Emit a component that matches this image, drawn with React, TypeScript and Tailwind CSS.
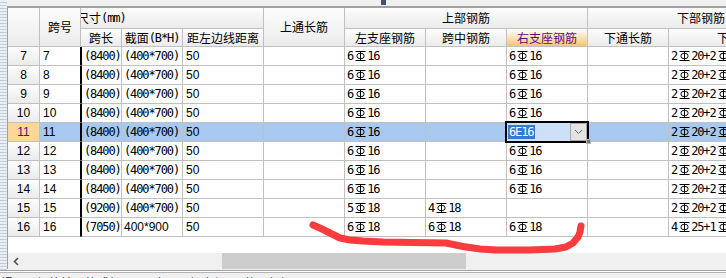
import React from "react";

const cols =
  "grid grid-cols-[32px_41px_41px_61px_81px_81px_81px_81px_81px_81px_81px] w-max";
const cjk = "font-['Noto_Sans_CJK_SC',sans-serif] text-[12px] leading-none";
const mono = "font-['DejaVu_Sans_Mono',monospace] text-[12px] tracking-[-1.1px] leading-none";
const sans = "font-['Liberation_Sans',sans-serif] text-[12px] leading-none";
const line = "border-r border-b border-[#c0c0c0]";
const head = "bg-linear-to-b from-[#fdfdfd] to-[#ebebeb]";

// HRB400 rebar mark
const Sym = () => (
  <svg width="12" height="12" viewBox="0 0 12 12" className="shrink-0 ml-[2px]" fill="none" stroke="#000" strokeWidth="1">
    <path d="M0.5 1.5h10M0.5 10.5h10M5.5 1.5v9" />
    <rect x="2" y="3.5" width="7" height="5" rx="2.2" />
  </svg>
);

const Rebar = ({ v }: { v: string }) => {
  if (!v) return null;
  const parts = v.split("E");
  return (
    <span className={`flex items-center ${mono}`}>
      {parts.map((p, i) => (
        <React.Fragment key={i}>
          {i > 0 && <Sym />}
          {p}
        </React.Fragment>
      ))}
    </span>
  );
};

type Row = {
  no: number;
  len: string;
  sec: string;
  left: string;
  mid: string;
  right: string;
  last: string;
};

const rows: Row[] = [
  ...[7, 8, 9, 10, 11, 12, 13, 14].map((no) => ({
    no,
    len: "(8400)",
    sec: "(400*700)",
    left: "6E16",
    mid: "",
    right: "6E16",
    last: "2E20+2E",
  })),
  { no: 15, len: "(9200)", sec: "(400*700)", left: "5E18", mid: "4E18", right: "", last: "2E20+2E" },
  { no: 16, len: "(7050)", sec: "400*900", left: "6E18", mid: "6E18", right: "6E18", last: "4E25+1E" },
];

const HeadCell = ({ className = "", children }: { className?: string; children?: React.ReactNode }) => (
  <div className={`${line} ${head} flex items-center justify-center overflow-hidden whitespace-nowrap ${cjk} ${className}`}>
    {children}
  </div>
);

const EditCell = () => (
  <div className={`${line} relative`}>
    <div className="absolute -left-[2px] -top-[2px] w-[84px] h-[22px] border-2 border-black bg-[#cde0f7] z-10 flex items-center">
      <span className={`ml-[1px] h-[14px] px-[1px] flex items-center bg-[#3478d8] text-white ${mono}`}>6E16</span>
      <div className="ml-auto w-[17px] h-[18px] bg-[#e3e3e3] border border-[#a9a9a9] flex items-center justify-center">
        <svg width="9" height="6" viewBox="0 0 9 6" fill="none" stroke="#6a6a6a" strokeWidth="1">
          <path d="M1 1l3.5 3.5L8 1" />
        </svg>
      </div>
    </div>
    <div className="absolute left-[79px] top-[16px] w-[5px] h-[5px] bg-[#7a7a7a] border border-[#b0b0b0] z-20" />
  </div>
);

export default function App() {
  return (
    <div className="w-[726px] h-[278px] overflow-hidden relative bg-[#f0f0f0] flex flex-col">
      <div className="flex h-[270px] shrink-0">
        <div className="w-[7px] shrink-0 bg-[repeating-linear-gradient(0deg,#c3cddb_0px,#c3cddb_1px,#eaeff6_1px,#eaeff6_3px)]" />
        <div className="flex-1 flex flex-col min-w-0">
          <div className="h-[6px] flex shrink-0">
            <div className="ml-[374px] w-[5px] h-[5px] bg-[#44536a]" />
          </div>
          <div className="h-[2px] bg-[#a0a0a0] shrink-0" />
          <div className="h-[261px] border-l border-[#a0a0a0] bg-white flex flex-col overflow-hidden">
            {/* header */}
            <div className={`${cols} grid-rows-[21px_18px]`}>
              <HeadCell className="row-span-2" />
              <HeadCell className="row-span-2">跨号</HeadCell>
              <HeadCell className="col-span-3 !justify-start">
                <span className="-ml-[4px] flex items-center">
                  尺寸<span className={mono}>(mm)</span>
                </span>
              </HeadCell>
              <HeadCell className="row-span-2">上通长筋</HeadCell>
              <HeadCell className="col-span-3">上部钢筋</HeadCell>
              <HeadCell className="col-span-2 !justify-start pl-[89px]">下部钢筋</HeadCell>
              <HeadCell>跨长</HeadCell>
              <HeadCell>
                截面<span className={mono}>(B*H)</span>
              </HeadCell>
              <HeadCell>距左边线距离</HeadCell>
              <HeadCell>左支座钢筋</HeadCell>
              <HeadCell>跨中钢筋</HeadCell>
              <HeadCell className="from-[#fdebc1] to-[#f5c66f] text-[#5c0d7c]">右支座钢筋</HeadCell>
              <HeadCell>下通长筋</HeadCell>
              <HeadCell className="!justify-start pl-[48px]">下部钢筋</HeadCell>
            </div>
            {/* data rows */}
            {rows.map((r) => {
              const sel = r.no === 11;
              return (
                <div key={r.no} className={`${cols} h-[19px] shrink-0 ${sel ? "bg-[#a7c8ef]" : "bg-white"}`}>
                  <div
                    className={`${line} flex items-center justify-center ${sans} ${
                      sel ? "bg-[#fdd797] text-[#5a0a78]" : head
                    }`}
                  >
                    {r.no}
                  </div>
                  <div className={`border-b border-[#c0c0c0] border-r border-r-black flex items-center px-[3px] ${sans}`}>
                    {r.no}
                  </div>
                  <div className={`${line} border-l border-l-black flex items-center px-[2px] overflow-hidden whitespace-nowrap ${mono}`}>
                    {r.len}
                  </div>
                  <div
                    className={`${line} flex items-center px-[2px] overflow-hidden whitespace-nowrap ${
                      r.sec.startsWith("(") ? mono : sans
                    }`}
                  >
                    {r.sec}
                  </div>
                  <div className={`${line} flex items-center px-[3px] ${sans}`}>50</div>
                  <div className={line} />
                  <div className={`${line} flex items-center px-[2px]`}>
                    <Rebar v={r.left} />
                  </div>
                  <div className={`${line} flex items-center px-[2px]`}>
                    <Rebar v={r.mid} />
                  </div>
                  {sel ? (
                    <EditCell />
                  ) : (
                    <div className={`${line} flex items-center px-[2px]`}>
                      <Rebar v={r.right} />
                    </div>
                  )}
                  <div className={line} />
                  <div className={`${line} flex items-center px-[2px] overflow-hidden`}>
                    <Rebar v={r.last} />
                  </div>
                </div>
              );
            })}
            <div className="h-[16px] shrink-0" />
            {/* horizontal scrollbar */}
            <div className="h-[16px] shrink-0 bg-[#f0f0f0] flex items-stretch">
              <div className="w-[16px] flex items-center justify-center">
                <svg width="6" height="9" viewBox="0 0 6 9" fill="none" stroke="#505050" strokeWidth="1.6">
                  <path d="M5 1L1.5 4.5 5 8" />
                </svg>
              </div>
              <div className="ml-[198px] w-[244px] bg-[#cdcdcd]" />
            </div>
          </div>
        </div>
      </div>
      <div className="h-[1px] bg-[#a0a0a0] shrink-0" />
      <div className="h-[1px] bg-white shrink-0" />
      <div className="h-[1px] bg-[#b4b4b4] shrink-0" />
      <div className={`pt-[4px] pl-[1px] whitespace-nowrap text-[#222] ${cjk}`}>
        提示：钢筋输入格式如 6E16 表示 6 根直径 16 的三级钢
      </div>

      {/* red pen mark */}
      <svg className="absolute left-0 top-0 pointer-events-none" width="726" height="278" viewBox="0 0 726 278">
        <polyline
          points="313,225 322,229 330,233 340,238 350,240 363,241 383,242 413,242.5 446,243 463,246.5 480,249 496,250 530,250 555,249 566,247 573,243 578,237 580,232 581,226"
          fill="none"
          stroke="#fb3b3e"
          strokeWidth="7"
          strokeLinecap="round"
          strokeLinejoin="round"
        />
      </svg>
    </div>
  );
}
